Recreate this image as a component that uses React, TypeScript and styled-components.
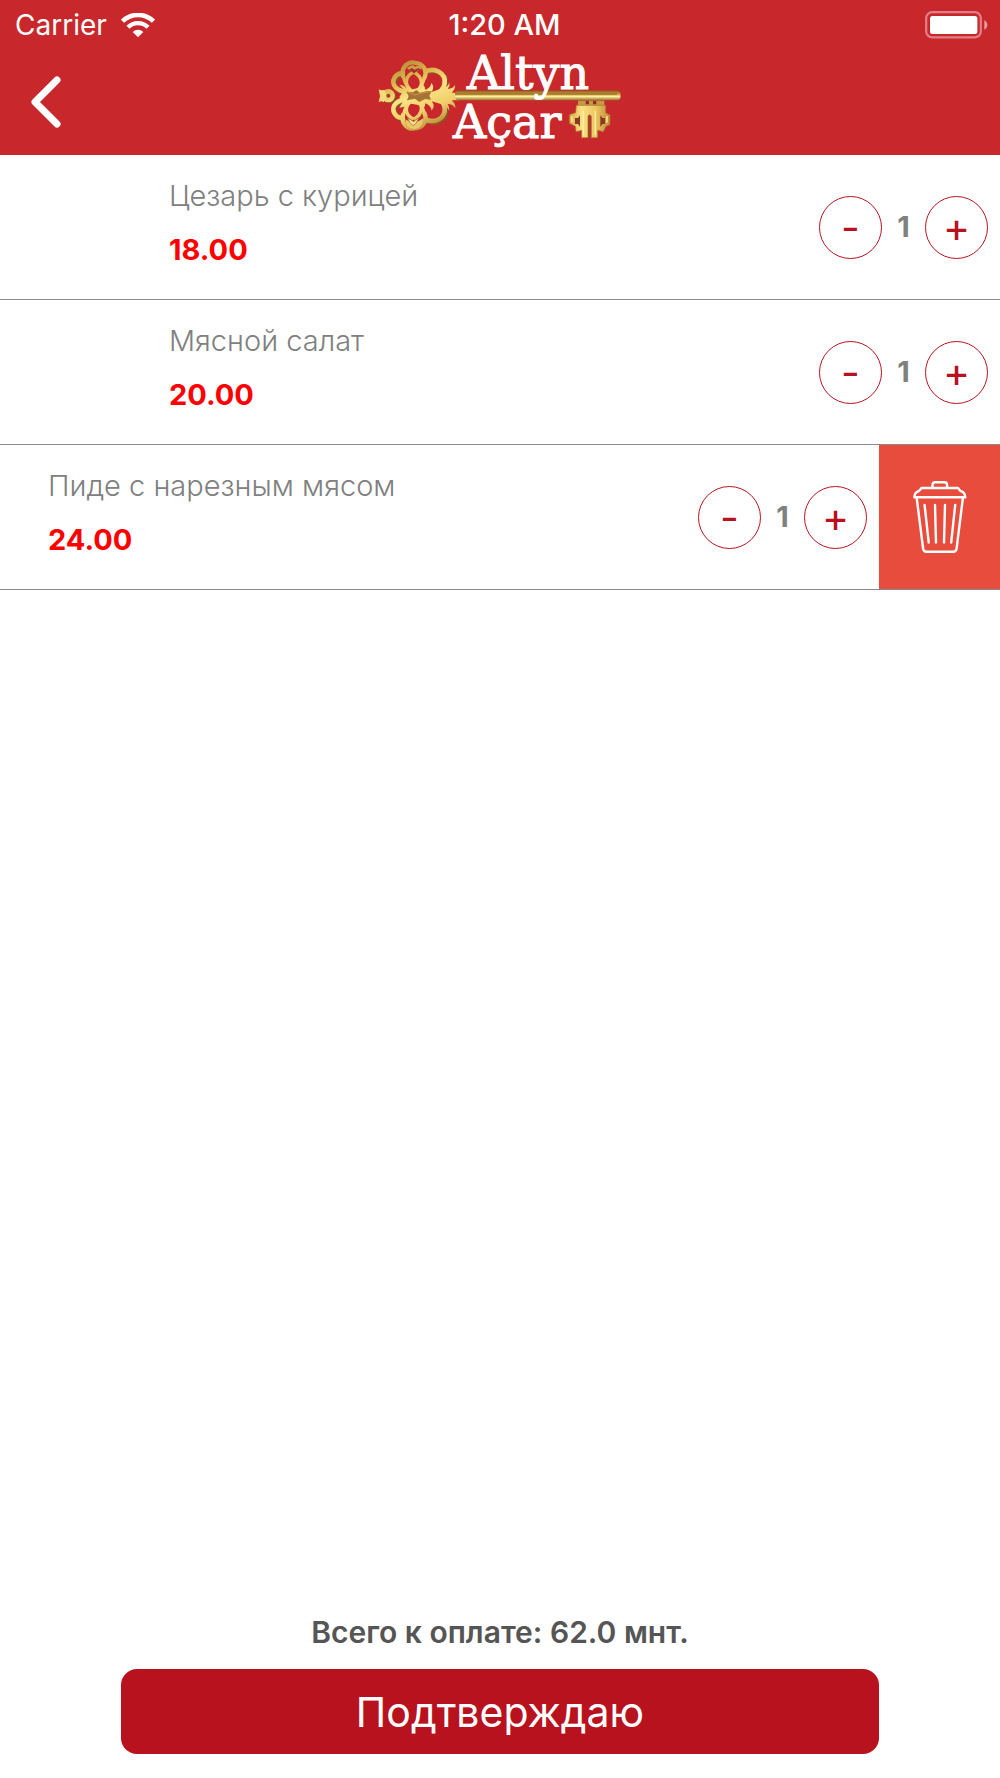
import React, { useState } from "react";
import styled, { createGlobalStyle } from "styled-components";

const GlobalStyle = createGlobalStyle`
  *, *::before, *::after { box-sizing: border-box; }
  body {
    margin: 0;
    background: #ffffff;
    font-family: Inter, "Noto Sans", sans-serif;
    font-size: 29px;
    line-height: 34px;
  }
  button { font: inherit; margin: 0; padding: 0; border: 0; cursor: pointer; }
  svg { display: block; }
`;

const Screen = styled.div`
  display: flex;
  flex-direction: column;
  min-height: 100vh;
`;

const Header = styled.header`
  background: #c8272c;
  color: #ffffff;
`;

const StatusBar = styled.div`
  display: grid;
  grid-template-columns: 1fr auto 1fr;
  align-items: center;
  height: 42px;
  padding: 8px 12px 0 15px;
`;

const Carrier = styled.div`
  display: flex;
  align-items: center;
  gap: 14px;
  font-size: 28px;
`;

const Clock = styled.time`
  padding-left: 6px;
  font-weight: 500;
`;

const StatusEnd = styled.div`
  display: flex;
  justify-content: flex-end;
`;

const NavBar = styled.nav`
  display: grid;
  grid-template-columns: 1fr auto 1fr;
  align-items: center;
  height: 113px;
`;

const BackButton = styled.button`
  justify-self: start;
  padding: 27px 28px 20px;
  background: none;
  color: inherit;
`;

const CartList = styled.ul`
  flex: 1;
  margin: 0;
  padding: 0;
  list-style: none;
`;

const CartRow = styled.li`
  display: flex;
  height: 145px;
  overflow: hidden;
  border-bottom: 1px solid #8a8a8a;
`;

const RowContent = styled.div<{ $swiped: boolean }>`
  display: flex;
  flex: none;
  width: 100%;
  padding-right: 12px;
  margin-left: ${(p) => (p.$swiped ? "-121px" : "0")};
`;

const Thumb = styled.div`
  flex: none;
  width: 169px;
`;

const Info = styled.div`
  display: flex;
  flex: 1;
  flex-direction: column;
  gap: 20px;
  padding-top: 24px;
`;

const Name = styled.span`
  color: #808080;
  font-weight: 300;
`;

const Price = styled.span`
  color: #ff0000;
  font-weight: 700;
`;

const Stepper = styled.div`
  display: flex;
  align-items: center;
`;

const RoundButton = styled.button`
  width: 63px;
  height: 63px;
  border: 1px solid #b9121f;
  border-radius: 50%;
  background: #ffffff;
  color: #b9121f;
  font-size: 41px;
  font-weight: 400;
`;

const Quantity = styled.output`
  width: 43px;
  color: #808080;
  font-weight: 700;
  text-align: center;
`;

const DeleteButton = styled.button`
  display: flex;
  flex: none;
  align-items: center;
  justify-content: center;
  width: 121px;
  background: #e84c3d;
  color: #ffffff;
`;

const Footer = styled.footer`
  display: flex;
  flex-direction: column;
  gap: 20px;
  padding: 0 121px 24px;
`;

const Total = styled.p`
  margin: 0;
  color: #555555;
  font-size: 30px;
  font-weight: 600;
  text-align: center;
`;

const ConfirmButton = styled.button`
  height: 85px;
  border-radius: 16px;
  background: #b8121f;
  color: #ffffff;
  font-size: 41px;
`;

const WifiIcon = () => (
  <svg width="34" height="25" viewBox="0 0 34 25" fill="none" stroke="currentColor" aria-hidden="true">
    <path d="M1.5 8.2a22.4 22.4 0 0 1 31 0" strokeWidth="4.6" />
    <path d="M7 14.2a14.2 14.2 0 0 1 20 0" strokeWidth="4.4" />
    <path d="M11.7 18.9a7.5 7.5 0 0 1 10.6 0L17 24.3z" fill="currentColor" stroke="none" />
  </svg>
);

const BatteryIcon = () => (
  <svg width="63" height="28" viewBox="0 0 63 28" role="img" aria-label="Battery">
    <rect x="1.2" y="1.2" width="54.6" height="25.2" rx="6" fill="none" stroke="#fff" strokeOpacity=".42" strokeWidth="2.2" />
    <rect x="5" y="5" width="47.4" height="18" rx="2.5" fill="#fff" />
    <path d="M59.3 9.2c4 1.8 4 7.6 0 9.6z" fill="#fff" fillOpacity=".55" />
  </svg>
);

const BackIcon = () => (
  <svg width="36" height="56" viewBox="0 0 36 56" fill="none" stroke="currentColor" strokeWidth="7" strokeLinecap="round" strokeLinejoin="round" aria-hidden="true">
    <path d="M29 6 7 28l22 22" />
  </svg>
);

const TrashIcon = () => (
  <svg width="54" height="74" viewBox="0 0 54 74" fill="none" stroke="currentColor" strokeWidth="2.4" strokeLinecap="round" strokeLinejoin="round" aria-hidden="true">
    <path d="M19.5 7.5V5q0-2.8 2.8-2.8h9q2.8 0 2.8 2.8v2.5" />
    <path d="M8.5 8h36.5l2.5 3q4.5 1 4.8 6.2H1.3Q1.7 12 6 11z" />
    <path d="m3.7 18 6.4 50.5q.5 3.2 3.5 3.2h26.5q3 0 3.5-3.2L49.9 18" />
    <path d="m11.6 25 4.1 37.5M22 25l1 37.5M32 25l-1 37.5M42.2 25l-4 37.5" />
  </svg>
);

const LogoWord = styled.text`
  fill: #ffffff;
  stroke: #ffffff;
  stroke-width: 1px;
  font-family: "DejaVu Serif", serif;
  font-size: 46px;
`;

const Logo = () => (
  <svg width="260" height="113" viewBox="370 42 260 113" role="img" aria-label="Altyn Açar">
    <defs>
      <linearGradient id="gold" gradientUnits="userSpaceOnUse" x1="60" y1="10" x2="150" y2="220">
        <stop offset="0" stopColor="#b58637" />
        <stop offset=".25" stopColor="#dcb14c" />
        <stop offset=".5" stopColor="#fbe384" />
        <stop offset=".75" stopColor="#efcf6b" />
        <stop offset="1" stopColor="#b98634" />
      </linearGradient>
      <linearGradient id="shaft" x1="0" y1="0" x2="0" y2="1">
        <stop offset="0" stopColor="#8e5c20" />
        <stop offset=".35" stopColor="#c59838" />
        <stop offset=".6" stopColor="#fff09a" />
        <stop offset="1" stopColor="#94632a" />
      </linearGradient>
      <linearGradient id="bit" x1="0" y1="0" x2="1" y2="0">
        <stop offset="0" stopColor="#d9aa48" />
        <stop offset=".3" stopColor="#f9e083" />
        <stop offset=".65" stopColor="#ecc662" />
        <stop offset="1" stopColor="#c08a36" />
      </linearGradient>
      <g id="bow" fill="none">
        <path d="M143 43C177 24 210 46 206 76c-2 15-14 28-32 31" />
        <path d="M143 182c34 19 67-3 63-33-2-15-14-28-32-31" />
        <path d="M86 47C58 40 42 72 59 88c7 7 18 12 34 15" />
        <path d="M86 178c-28 7-44-25-27-41 7-7 18-12 34-15" />
        <circle cx="37" cy="113" r="13" />
      </g>
    </defs>
    <g transform="translate(376 58) scale(.3333)">
      <use href="#bow" stroke="#8b5522" strokeWidth="15" transform="translate(4 4)" />
      <use href="#bow" stroke="url(#gold)" strokeWidth="14" />
      <path d="M8 94q8 5 17 1l5 13v12l-7 13q-8-6-15 0l4-19z" fill="#f6db77" />
      <g fill="none" stroke="url(#gold)" strokeWidth="10">
        <path d="M82 58C72 25 99 10 115 14c29 2 41 26 29 48" strokeWidth="13" />
        <path d="M82 167c-10 33 17 48 33 44 29-2 41-26 29-48" strokeWidth="13" />
        <path d="M113 42C83 57 85 85 112 103M113 42c31 17 29 46 5 61" />
        <path d="M113 184c-30-15-28-43-1-61M113 184c31-17 29-46 5-61" />
        <path d="M82 55c5 24 14 38 32 49M146 55c-5 24-14 38-28 49" />
        <path d="M82 171c5-24 14-38 32-49M146 171c-5-24-14-38-28-49" />
      </g>
      <path d="M93 31q15-16 24-5 13-8 22 5-8 3-25 17-13-12-21-17z" fill="#cda044" />
      <path d="M99 36q8-10 17 0 12-10 17-2-8 3-19 12-8-8-15-10z" fill="#a23227" />
      <path d="M88 184q25 20 54-4-2 33-28 34-25-2-26-30z" fill="#eac769" />
      <path d="M94 179q8 5 19 12 8-8 15-10-8 20-17 22-10-5-17-24z" fill="#f9e38a" stroke="#9a6428" strokeWidth="2" />
      <path d="M84 97 70 80q13 0 20 9 9 1 15 6l20-5 16-11q8 10 7 17 17-8 18-22 12 14 0 28l31-8q21-8 23-21 3 10-5 20 17-1 22-12 1 14-10 23h25v23h-25q12 9 11 24-8-13-23-13 6 9 5 21-7-17-28-22l-25-7q12 14 0 28-2-15-19-22 1 10-7 17l-14-12-21-4-19 9-17 3 12-21-12-11z" fill="url(#gold)" />
      <path d="m121 96 11 8 21-5 14 1-7 13 5 12-18-2-17 9-13-10-24 5 5-13-7-13 20 2z" fill="#a47335" />
      <path d="m93 101 24 10 13-4 37-7" fill="none" stroke="#c99647" strokeWidth="3" />
    </g>
    <rect x="455" y="90.5" width="165.5" height="10" rx="4" fill="url(#shaft)" />
    <path d="M455 94h162" stroke="#8e6224" strokeWidth="1" />
    <g transform="translate(560 85) scale(.3333)">
      <path d="M54 47h79v15H54z" fill="#c69a42" />
      <path d="M77 48h10v10H77zM99 48h10v10H99z" fill="#8f3024" />
      <path d="M49 61h88v22l13 7v29l-12 5-8 16-17-4v22H94V94q-6-10-10 0v64H65v-22l-17 4-2-16-18-9V89l19-6z" fill="url(#bit)" stroke="#a87531" strokeWidth="2" />
      <path d="M45 99h9l6-8v34l-6-8H45zM135 99h-7l-7-8v34l7-8h7z" fill="#873b23" />
      <path d="M36 94v18M141 93v20" stroke="#fff09f" strokeWidth="4" />
      <path d="M88 92v66" stroke="#9b4a25" strokeWidth="5" />
      <path d="M70 78v73M106 78v73" stroke="#fff0a0" strokeWidth="4" />
    </g>
    <LogoWord x="467" y="89">Altyn</LogoWord>
    <LogoWord x="453" y="138">Açar</LogoWord>
  </svg>
);

type Item = { id: number; name: string; price: number; count: number; swiped: boolean };

const initialItems: Item[] = [
  { id: 1, name: "Цезарь с курицей", price: 18, count: 1, swiped: false },
  { id: 2, name: "Мясной салат", price: 20, count: 1, swiped: false },
  { id: 3, name: "Пиде с нарезным мясом", price: 24, count: 1, swiped: true },
];

export default function App() {
  const [items, setItems] = useState(initialItems);
  const total = items.reduce((sum, i) => sum + i.price * i.count, 0);

  const change = (id: number, delta: number) =>
    setItems((list) => list.map((i) => (i.id === id ? { ...i, count: Math.max(1, i.count + delta) } : i)));
  const remove = (id: number) => setItems((list) => list.filter((i) => i.id !== id));

  return (
    <Screen>
      <GlobalStyle />
      <Header>
        <StatusBar>
          <Carrier>
            <span>Carrier</span>
            <WifiIcon />
          </Carrier>
          <Clock>1:20 AM</Clock>
          <StatusEnd>
            <BatteryIcon />
          </StatusEnd>
        </StatusBar>
        <NavBar>
          <BackButton type="button" aria-label="Назад">
            <BackIcon />
          </BackButton>
          <Logo />
        </NavBar>
      </Header>
      <CartList>
        {items.map((item) => (
          <CartRow key={item.id}>
            <RowContent $swiped={item.swiped}>
              <Thumb />
              <Info>
                <Name>{item.name}</Name>
                <Price>{item.price.toFixed(2)}</Price>
              </Info>
              <Stepper>
                <RoundButton type="button" aria-label="Меньше" onClick={() => change(item.id, -1)}>
                  -
                </RoundButton>
                <Quantity>{item.count}</Quantity>
                <RoundButton type="button" aria-label="Больше" onClick={() => change(item.id, 1)}>
                  +
                </RoundButton>
              </Stepper>
            </RowContent>
            {item.swiped && (
              <DeleteButton type="button" aria-label="Удалить" onClick={() => remove(item.id)}>
                <TrashIcon />
              </DeleteButton>
            )}
          </CartRow>
        ))}
      </CartList>
      <Footer>
        <Total>Всего к оплате: {total.toFixed(1)} мнт.</Total>
        <ConfirmButton type="button">Подтверждаю</ConfirmButton>
      </Footer>
    </Screen>
  );
}
